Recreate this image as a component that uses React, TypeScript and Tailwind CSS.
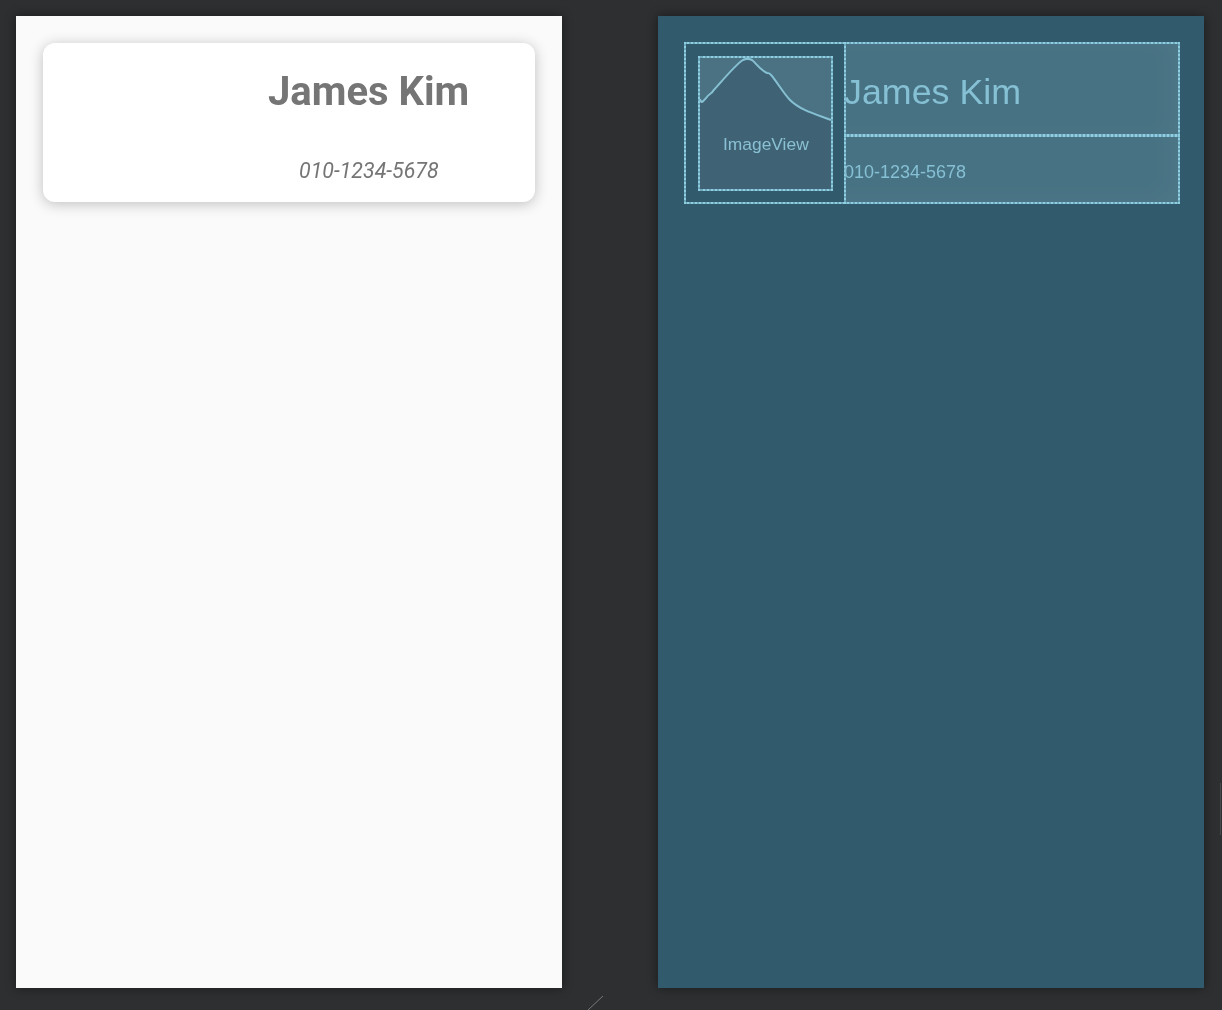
const line = "border-2 border-solid border-[#6fa9be] outline-2 outline-dotted -outline-offset-2 outline-[#8fcde0]";

export default function App() {
  return (
    <div className="relative flex h-[1010px] w-[1222px] items-start gap-[96px] overflow-hidden bg-[#2e2f31] pl-[16px] pt-[16px] font-['Roboto',sans-serif]">
      <div className="h-[972px] w-[546px] bg-[#fafafa] p-[27px] shadow-[0_0_10px_rgba(0,0,0,0.45)]">
        <div className="flex h-[159px] w-[492px] rounded-[12px] bg-white shadow-[0_2px_14px_rgba(0,0,0,0.24)]">
          <div className="w-[160px] shrink-0" />
          <div className="flex flex-1 flex-col items-center">
            <div className="flex h-[97px] w-[332px] items-center justify-center pt-[1px] text-[40px] font-bold leading-none text-[#757575]">
              <span className="will-change-transform">James Kim</span>
            </div>
            <div className="flex h-[61px] w-[332px] items-center justify-center text-[21.4px] italic leading-none text-[#757575]">
              <span className="will-change-transform">010-1234-5678</span>
            </div>
          </div>
        </div>
      </div>

      <div className="h-[972px] w-[546px] bg-[#325a6d] p-[26px] shadow-[0_0_10px_rgba(0,0,0,0.45)] font-['Liberation_Sans',sans-serif]">
        <div className={`flex h-[162px] w-[496px] ${line}`}>
          <div className="w-[158px] shrink-0 pl-[12px] pt-[12px]">
            <div className={`relative flex h-[135px] w-[135px] items-start justify-center bg-[#3f6274] pt-[76px] text-[17.4px] leading-[20px] text-[#8ac0d3] ${line}`}>
              <svg className="absolute inset-0 h-[131px] w-[131px] overflow-visible" viewBox="0 0 131 131" fill="none">
                <path d="M0 41 L0 0 L131 0 L131 62 C115 56 100 52 90 42 C84 36 75 21 71 17 C70 15 69 15 67 15 C60 12 56 5 52 2 C49 0.5 46 0.5 43 2 C36 6 23 22 13 33 C12 35 11 35 10 36 C7 38 4 43 2 44 C1 44 0 42 0 41 Z" fill="#4a7283" />
                <path d="M0 41 C0 42 1 44 2 44 C4 43 7 38 10 36 C11 35 12 35 13 33 C23 22 36 6 43 2 C46 0.5 49 0.5 52 2 C56 5 60 12 67 15 C69 15 70 15 71 17 C75 21 84 36 90 42 C100 52 115 56 131 62" stroke="#86c0d3" strokeWidth="2" />
              </svg>
              <span className="relative will-change-transform">ImageView</span>
            </div>
          </div>
          <div className="-my-[2px] -mr-[2px] flex flex-1 flex-col">
            <div className={`flex h-[94px] items-center bg-[#477283] pt-[8px] text-[35.8px] leading-none text-[#86c0d4] shadow-[inset_-14px_0_20px_rgba(255,255,255,0.03)] ${line}`}>
              <span className="-ml-[2px] will-change-transform">James Kim</span>
            </div>
            <div className={`-mt-[1px] flex h-[69px] items-center bg-[#477283] pt-[5px] text-[18px] leading-none text-[#86c0d4] shadow-[inset_-14px_-8px_20px_rgba(255,255,255,0.03)] ${line}`}>
              <span className="-ml-[2px] will-change-transform">010-1234-5678</span>
            </div>
          </div>
        </div>
      </div>

      <svg className="absolute left-[585px] top-[994px] h-[16px] w-[20px]" viewBox="0 0 20 16" fill="none">
        <path d="M3 16 L18 2" stroke="#77787a" strokeWidth="1" />
      </svg>
      <div className="absolute left-[1220px] top-[783px] h-[52px] w-[1px] bg-[#48494b]" />
    </div>
  );
}
